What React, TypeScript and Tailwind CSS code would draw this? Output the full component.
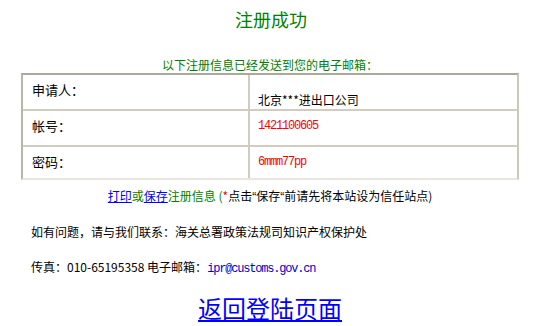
import React from 'react';

const rows = [
  { label: '申请人：', value: '北京***进出口公司', valueClass: 'text-black pt-[17px]' },
  { label: '帐号：', value: '1421100605', valueClass: 'text-[#ff0000] pt-[7px] font-["Liberation_Mono",monospace] tracking-[-1.2px]' },
  { label: '密码：', value: '6mmm77pp', valueClass: 'text-[#ff0000] pt-[7px] font-["Liberation_Mono",monospace] tracking-[-1.2px]' },
];

const App: React.FC = () => {
  return (
    <div className="w-[536px] h-[326px] bg-white overflow-hidden font-['Noto_Sans_CJK_SC',sans-serif] text-[12px] leading-[16px] text-black">
      {/* Title */}
      <div className="pt-[7px] text-center text-[18px] leading-[24px] text-[#008000] pl-[6px]">注册成功</div>

      <div className="mt-[26px] text-center text-[#008000] pl-[4px]">以下注册信息已经发送到您的电子邮箱：</div>

      {/* Info table */}
      <div className="ml-[21px] w-[498px] border-2 border-[#ccc8bc] border-t-[#aca89c] border-l-[#b8b4a8] border-b-[#e8e6de]">
        {rows.map((row, i) => (
          <div
            key={row.label}
            className={`grid grid-cols-[227px_1fr] ${i > 0 ? 'border-t-2 border-[#d0ccc0]' : ''} ${i === 0 ? 'h-[34px]' : i === 1 ? 'h-[36px]' : 'h-[33px]'}`}
          >
            <div className="pl-[9px] pt-[7px] border-r-2 border-[#d0ccc0] text-[13px]">{row.label}</div>
            <div className={`pl-[8px] ${row.valueClass}`}>{row.value}</div>
          </div>
        ))}
      </div>

      <div className="mt-[8px] text-center pl-[4px]">
        <a href="#" className="text-[#0000ff] underline">打印</a>
        <span className="text-[#008000]">或</span>
        <a href="#" className="text-[#0000ff] underline">保存</a>
        <span className="text-[#008000]">注册信息 (</span>
        <span className="text-[#ff0000]">*</span>
        <span>点击</span>
        <span className="font-['Liberation_Sans',sans-serif]">“</span>
        <span>保存</span>
        <span className="font-['Liberation_Sans',sans-serif]">“</span>
        <span>前请先将本站设为信任站点)</span>
      </div>

      <div className="mt-[19px] pl-[31px]">如有问题，请与我们联系：海关总署政策法规司知识产权保护处</div>

      <div className="mt-[19px] pl-[31px]">
        传真：010-65195358 电子邮箱：
        <span className="text-[#0000cc] font-['Liberation_Mono',monospace] tracking-[-1.2px]">ipr@customs.gov.cn</span>
      </div>

      <div className="mt-[17px] text-center text-[24px] leading-[28px] pl-[4px]">
        <a href="#" className="text-[#0000ff] underline">返回登陆页面</a>
      </div>
    </div>
  );
};

export default App;
